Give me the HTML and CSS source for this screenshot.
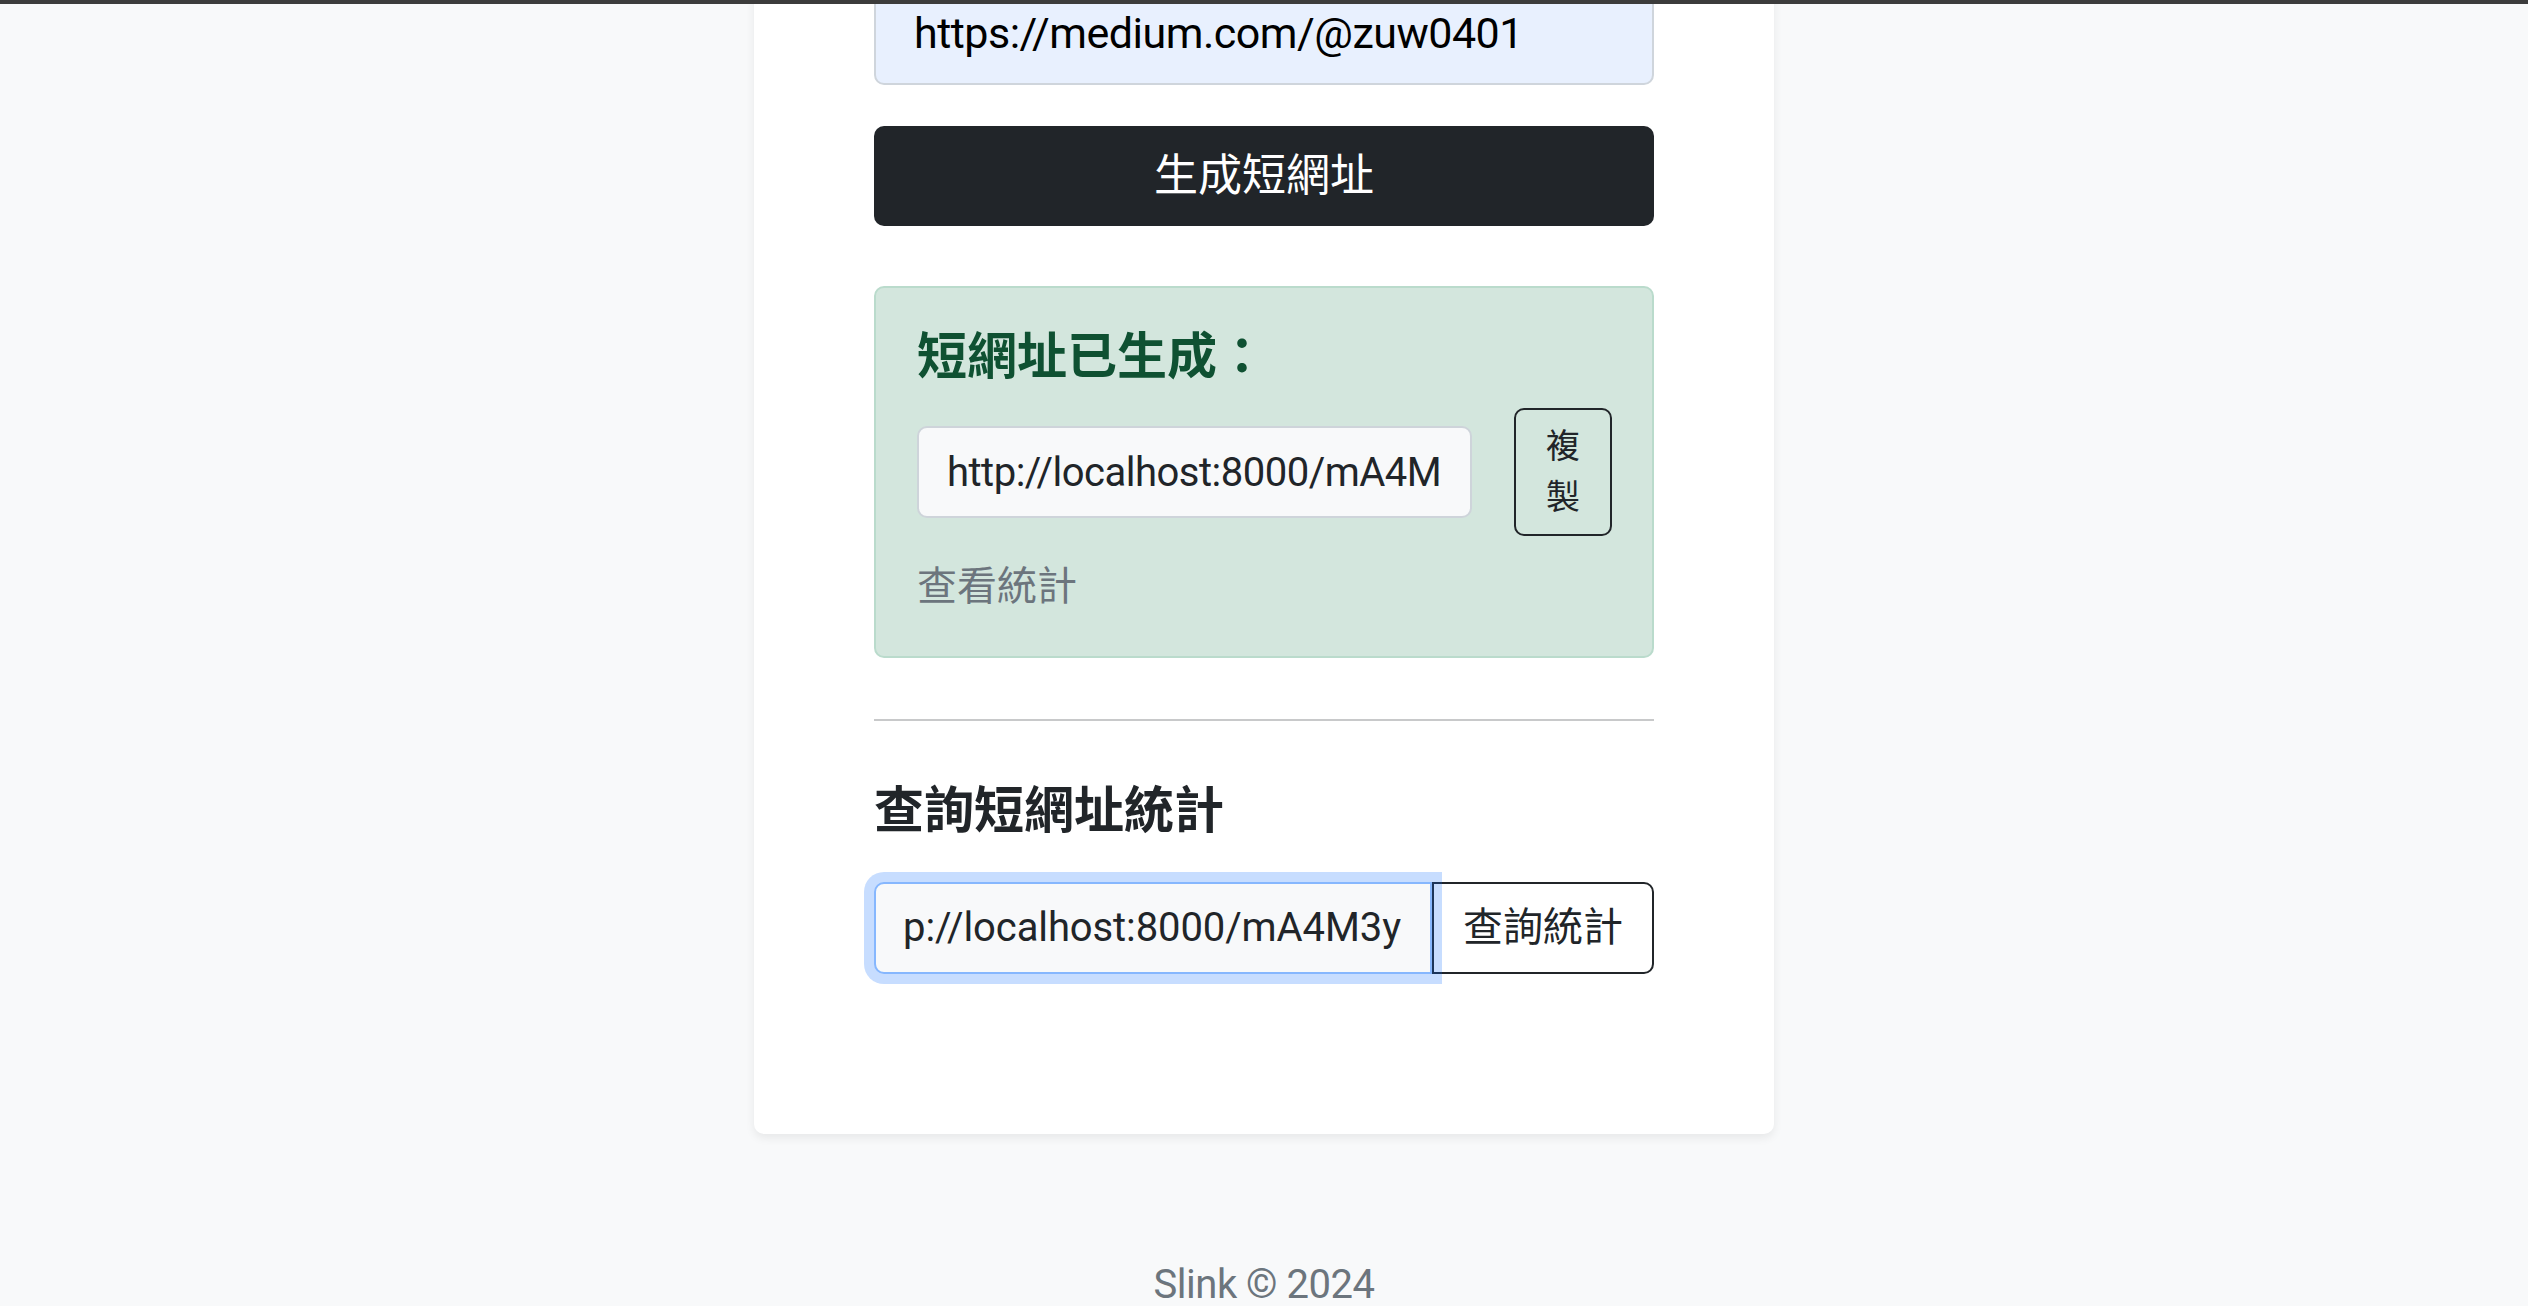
FILE: index.html
```html
<!DOCTYPE html>
<html lang="zh-Hant">
<head>
<meta charset="utf-8">
<title>Slink</title>
<link rel="stylesheet" href="styles.css">
</head>
<body>
<div class="topbar"></div>
<main class="page">
  <section class="card">
    <form class="shorten">
      <input class="url-input" type="text" value="https://medium.com/@zuw0401">
      <button type="button" class="btn-dark">生成短網址</button>
    </form>

    <div class="alert">
      <h4 class="alert-title">短網址已生成：</h4>
      <div class="result-row">
        <input class="result-input" type="text" readonly value="http://localhost:8000/mA4M3y">
        <button type="button" class="btn-copy">複製</button>
      </div>
      <a class="stats-link" href="#">查看統計</a>
    </div>

    <hr class="divider">

    <h4 class="section-title">查詢短網址統計</h4>
    <div class="input-group">
      <div class="query-input"><span class="query-text">http://localhost:8000/mA4M3y</span></div>
      <button type="button" class="btn-query">查詢統計</button>
    </div>
  </section>
</main>
<footer class="footer">Slink © 2024</footer>
</body>
</html>
```

FILE: styles.css
```css
* { box-sizing: border-box; }

html, body {
  margin: 0;
  padding: 0;
}

body {
  background: #f8f9fa;
  color: #212529;
  font-family: Roboto, "Noto Sans CJK TC", "Noto Sans", sans-serif;
  font-size: 40px;
  line-height: 1.5;
  overflow: hidden;
  height: 1306px;
}

.topbar {
  position: fixed;
  top: 0;
  left: 0;
  right: 0;
  height: 4px;
  background: #3c3c3c;
  z-index: 10;
}

.page {
  display: flex;
  justify-content: center;
  margin-top: -60px;
}

.card {
  width: 1020px;
  background: #fff;
  border-radius: 10px;
  box-shadow: 0 4px 10px rgba(0, 0, 0, 0.07);
  padding: 41px 120px 160px;
}

.shorten {
  display: flex;
  flex-direction: column;
  gap: 41px;
  margin: 0;
}

.url-input {
  display: block;
  width: 100%;
  height: 104px;
  font: inherit;
  font-size: 43px;
  letter-spacing: -0.5px;
  color: #000;
  background: #e8f0fe;
  border: 2px solid #cfd5dc;
  border-radius: 10px;
  padding: 0 38px;
  outline: none;
}

.btn-dark {
  display: block;
  width: 100%;
  height: 100px;
  background: #212529;
  color: #fff;
  border: 0;
  border-radius: 10px;
  font: inherit;
  font-size: 44px;
  cursor: pointer;
}

.alert {
  margin-top: 60px;
  background: #d3e6dd;
  border: 2px solid #badbcc;
  border-radius: 10px;
  padding: 40px 40px 40px 41px;
}

.alert-title {
  margin: 0 0 22px;
  font-size: 50px;
  line-height: 58px;
  font-weight: 700;
  color: #0f5132;
}

.result-row {
  display: flex;
  align-items: center;
  gap: 42px;
}

.result-input {
  flex: 1;
  min-width: 0;
  height: 92px;
  font: inherit;
  font-size: 40px;
  letter-spacing: -0.5px;
  color: #212529;
  background: #f8f9fa;
  border: 2px solid #ced4da;
  border-radius: 10px;
  padding: 0 28px;
  outline: none;
}

.btn-copy {
  width: 98px;
  height: 128px;
  flex: none;
  background: transparent;
  color: #212529;
  border: 2px solid #212529;
  border-radius: 10px;
  padding: 11px 24px;
  font: inherit;
  font-size: 34px;
  line-height: 51px;
}

.stats-link {
  display: block;
  margin-top: 21px;
  font-size: 40px;
  line-height: 59px;
  color: #6c757d;
  text-decoration: none;
}

.divider {
  margin: 61px 0 0;
  border: 0;
  border-top: 2px solid #c8c9ca;
}

.section-title {
  margin: 61px 0 42px;
  font-size: 50px;
  line-height: 58px;
  font-weight: 700;
  color: #212529;
}

.input-group {
  display: flex;
  height: 92px;
}

.query-input {
  position: relative;
  z-index: 2;
  flex: 1;
  min-width: 0;
  background: #f8f9fa;
  border: 2px solid #86b7fe;
  border-radius: 10px 0 0 10px;
  box-shadow: 0 0 0 10px rgba(13, 110, 253, 0.23);
  padding: 0 29px 0 28px;
  display: flex;
  align-items: center;
}

.query-text {
  display: flex;
  justify-content: flex-end;
  width: 100%;
  overflow: hidden;
  white-space: nowrap;
  font-size: 40px;
  letter-spacing: -0.1px;
  line-height: 60px;
  color: #212529;
}

.btn-query {
  width: 222px;
  flex: none;
  background: #fff;
  color: #212529;
  border: 2px solid #212529;
  border-radius: 0 10px 10px 0;
  font: inherit;
  font-size: 40px;
  padding: 0;
}

.footer {
  margin-top: 121px;
  text-align: center;
  font-size: 40px;
  letter-spacing: -0.5px;
  line-height: 60px;
  color: #6c757d;
}
```
